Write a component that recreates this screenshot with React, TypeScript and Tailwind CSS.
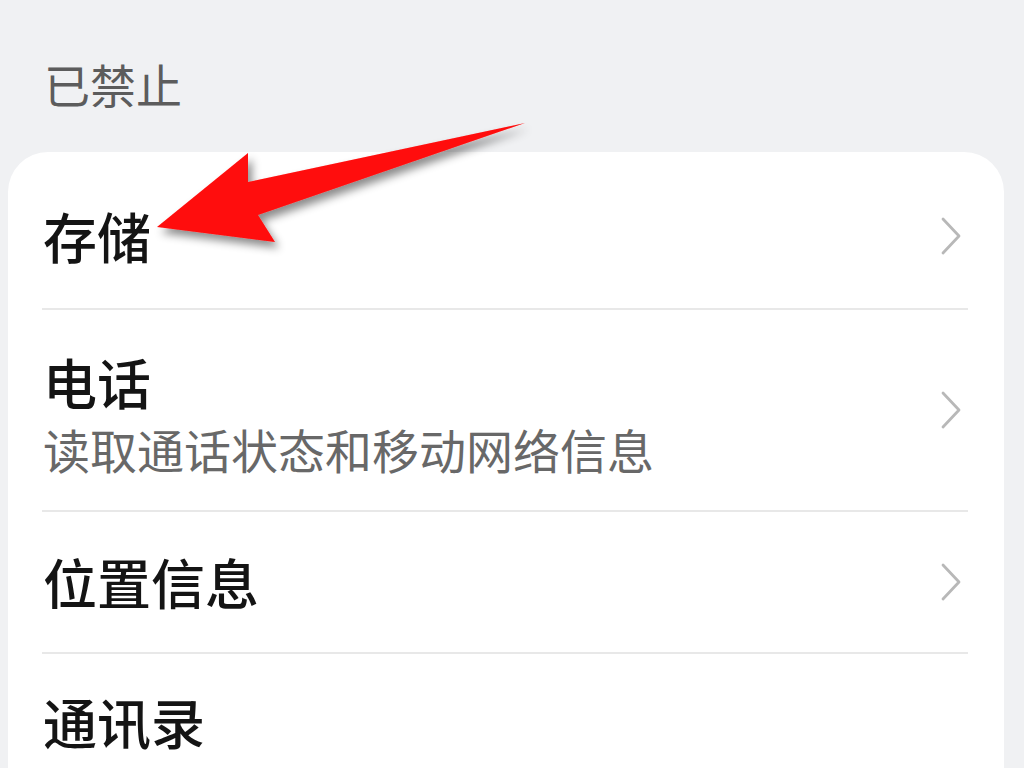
import React from 'react';

const font = { fontFamily: '"Noto Sans CJK SC", "Noto Sans", sans-serif' };

function Chevron() {
  return (
    <svg width="22" height="40" viewBox="0 0 22 40" className="shrink-0">
      <polyline points="3,3 19,20 3,37" fill="none" stroke="#b8b8b8" strokeWidth="2.8" strokeLinecap="round" strokeLinejoin="round" />
    </svg>
  );
}

function Divider() {
  return <div className="ml-[34px] mr-[36px] h-[2px] bg-[#e8e8e8]" />;
}

function Row({ title, sub, h, arrow = true }: { title: string; sub?: string; h: string; arrow?: boolean }) {
  return (
    <div className={`flex items-center justify-between pl-[35px] pr-[42px] ${h}`}>
      {sub ? (
        <div className="flex flex-col pt-[8px]">
          <span className="text-[54px] leading-[60px] font-medium text-[#141414]">{title}</span>
          <span className="mt-[10px] text-[47px] leading-[54px] text-[#686868]">{sub}</span>
        </div>
      ) : (
        <span className="text-[54px] leading-[60px] font-medium text-[#141414]">{title}</span>
      )}
      {arrow && <Chevron />}
    </div>
  );
}

export default function App() {
  return (
    <div className="relative h-[768px] w-[1024px] overflow-hidden bg-[#f0f1f3]" style={font}>
      <div className="pl-[44px] pt-[56px] mb-[42px] text-[46px] leading-[54px] text-[#5c5c5c]">已禁止</div>

      <div className="ml-[8px] mr-[20px] h-[700px] rounded-[40px] bg-white pt-[12px]">
        <Row title="存储" h="h-[144px]" />
        <Divider />
        <Row title="电话" sub="读取通话状态和移动网络信息" h="h-[200px]" />
        <Divider />
        <Row title="位置信息" h="h-[140px]" />
        <Divider />
        <Row title="通讯录" h="h-[136px]" arrow={false} />
      </div>

      {/* red annotation arrow */}
      <svg className="pointer-events-none absolute left-0 top-0" width="1024" height="768" viewBox="0 0 1024 768">
        <defs>
          <filter id="sh" x="-20%" y="-40%" width="140%" height="180%">
            <feDropShadow dx="4" dy="6" stdDeviation="4" floodColor="#000" floodOpacity="0.45" />
          </filter>
        </defs>
        <polygon points="157,227 248,153 248,182 525,123 258,215 275,242" fill="#ff0a0a" filter="url(#sh)" />
      </svg>
    </div>
  );
}
